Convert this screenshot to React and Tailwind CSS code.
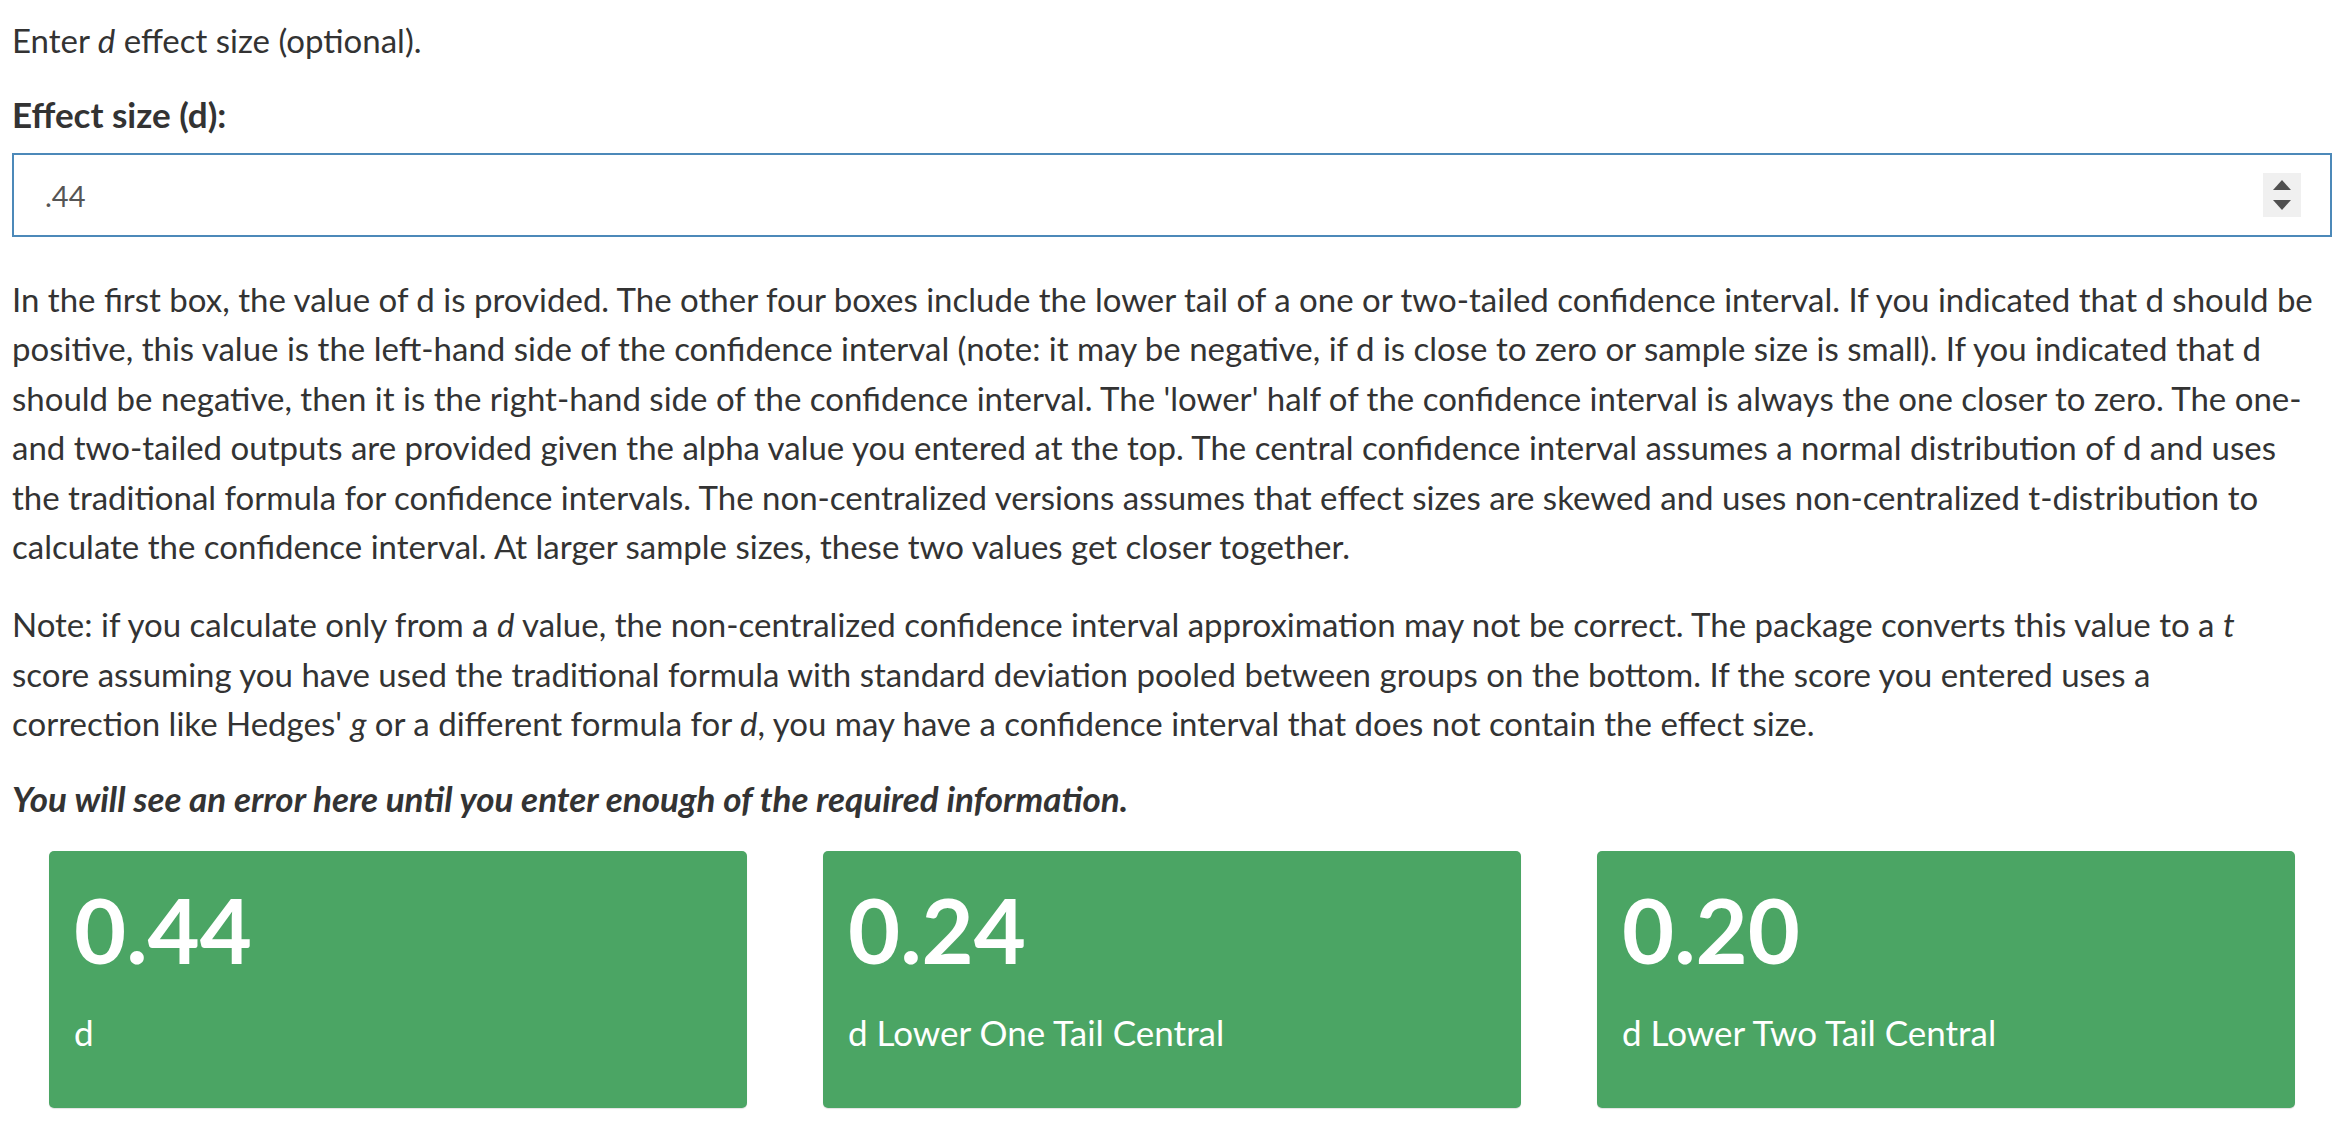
import React from "react";

const LINES_1 = [
  <>In the first box, the value of d is provided. The other four boxes include the lower tail of a one or two-tailed confidence interval. If you indicated that d should be</>,
  <>positive, this value is the left-hand side of the confidence interval (note: it may be negative, if d is close to zero or sample size is small). If you indicated that d</>,
  <>should be negative, then it is the right-hand side of the confidence interval. The 'lower' half of the confidence interval is always the one closer to zero. The one-</>,
  <>and two-tailed outputs are provided given the alpha value you entered at the top. The central confidence interval assumes a normal distribution of d and uses</>,
  <>the traditional formula for confidence intervals. The non-centralized versions assumes that effect sizes are skewed and uses non-centralized t-distribution to</>,
  <>calculate the confidence interval. At larger sample sizes, these two values get closer together.</>,
];

const LINES_2 = [
  <>Note: if you calculate only from a <i>d</i> value, the non-centralized confidence interval approximation may not be correct. The package converts this value to a <i>t</i></>,
  <>score assuming you have used the traditional formula with standard deviation pooled between groups on the bottom. If the score you entered uses a</>,
  <>correction like Hedges' <i>g</i> or a different formula for <i>d</i>, you may have a confidence interval that does not contain the effect size.</>,
];

const BOXES = [
  { value: "0.44", label: "d" },
  { value: "0.24", label: "d Lower One Tail Central" },
  { value: "0.20", label: "d Lower Two Tail Central" },
];

function ValueBox({ value, label }) {
  return (
    <div className="h-[257px] rounded-[5px] bg-[#4ba564] px-[25px] pt-[34px] text-white shadow-[0_1px_1px_rgba(0,0,0,0.12)]">
      <div className="text-[90px] font-bold leading-[88px] whitespace-nowrap">{value}</div>
      <div className="mt-[35px] text-[35px] leading-[48px] whitespace-nowrap">{label}</div>
    </div>
  );
}

// spinner drawn by hand, the page is photographed without hover
function Spinner() {
  return (
    <div className="flex h-[44px] w-[38px] flex-col items-center justify-center gap-[10px] bg-[#f0f0f0]">
      <svg width="18" height="10" viewBox="0 0 18 10">
        <polygon points="9,0 18,10 0,10" fill="#505050" />
      </svg>
      <svg width="18" height="10" viewBox="0 0 18 10">
        <polygon points="0,0 18,0 9,10" fill="#505050" />
      </svg>
    </div>
  );
}

export default function App() {
  return (
    <div className="min-h-screen bg-white px-[12px] pt-[16px] font-[family-name:Lato,sans-serif] text-[33px] leading-[49.5px] text-[#333]">
      <p>
        Enter <i>d</i> effect size (optional).
      </p>
      <label className="mt-[24.5px] block text-[35px] font-bold">Effect size (d):</label>

      <div className="mt-[13px] flex h-[84px] items-center justify-between border-2 border-[#4c89b9] pl-[31px] pr-[29px]">
        <span className="pt-[3px] text-[29px] leading-normal text-[#555]">.44</span>
        <Spinner />
      </div>

      <div className="mt-[38px] whitespace-nowrap">
        {LINES_1.map((l, i) => (
          <div key={i}>{l}</div>
        ))}
      </div>

      <div className="mt-[28.5px] whitespace-nowrap">
        {LINES_2.map((l, i) => (
          <div key={i}>{l}</div>
        ))}
      </div>

      <p className="mt-[25px] text-[35px] font-bold italic">
        You will see an error here until you enter enough of the required information.
      </p>

      <div className="mx-[37px] mt-[28px] grid grid-cols-3 gap-[76px]">
        {BOXES.map((b) => (
          <ValueBox key={b.value} {...b} />
        ))}
      </div>
    </div>
  );
}
